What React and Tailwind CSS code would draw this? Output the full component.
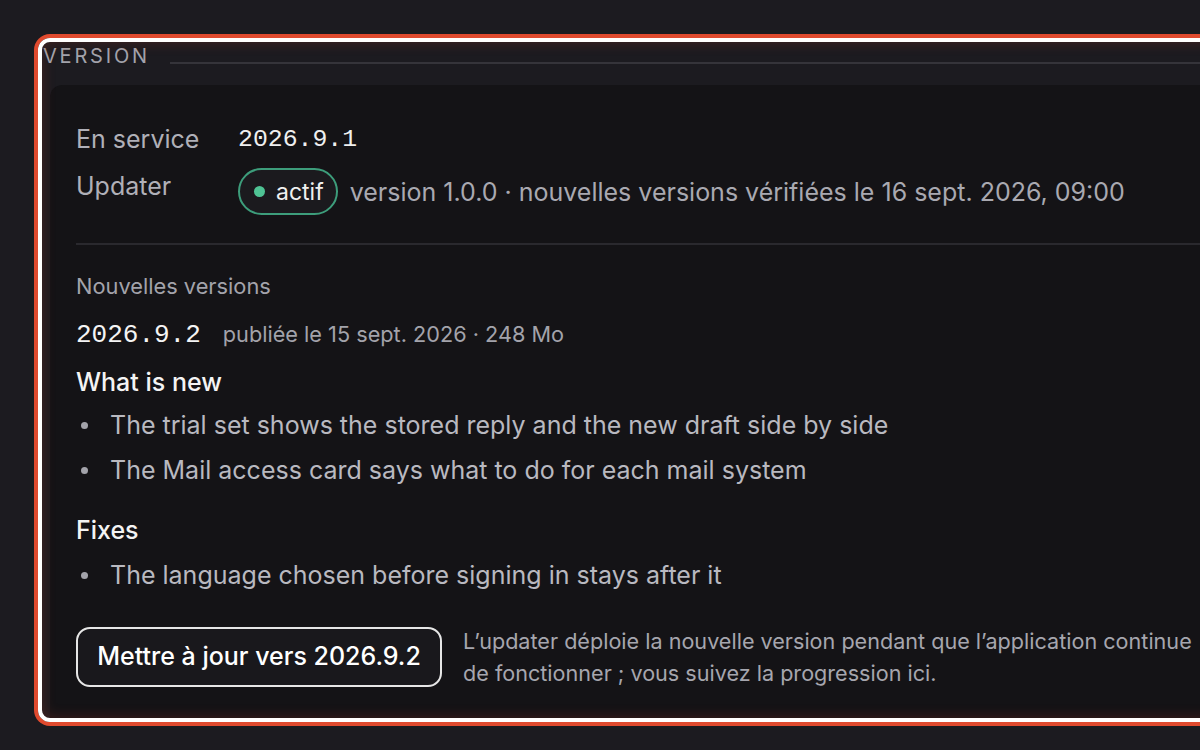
import React from "react";

const whatsNew = [
  "The trial set shows the stored reply and the new draft side by side",
  "The Mail access card says what to do for each mail system",
];

const fixes = ["The language chosen before signing in stays after it"];

function Bullets({ items, className }) {
  return (
    <ul className={`flex flex-col gap-[9px] ${className}`}>
      {items.map((item) => (
        <li key={item} className="flex items-center text-[25px] leading-[36px] text-[#b9b9c0]">
          <span className="w-[16px] flex justify-center">
            <span className="w-[7px] h-[7px] rounded-full bg-[#a3a3aa]"></span>
          </span>
          <span className="ml-[18px] whitespace-nowrap">{item}</span>
        </li>
      ))}
    </ul>
  );
}

export default function App() {
  return (
    <div className="w-[1200px] h-[750px] overflow-hidden bg-[#1c1b20] font-['Inter',sans-serif] pt-[38px] pl-[38px]">
      {/* highlighted section */}
      <div className="relative w-[1240px] h-[684px] rounded-[12px] border-4 border-white shadow-[0_0_0_4px_#e04a2e] overflow-hidden flex flex-col">
        <div className="flex items-end">
          <span className="pl-[1px] text-[20px] leading-[28px] tracking-[0.14em] text-[#a3a3ab]">VERSION</span>
          <div className="ml-[20px] mb-[6px] flex-1 h-[2px] bg-[#35343a]"></div>
        </div>

        <div className="mt-[15px] ml-[8px] flex-1 rounded-tl-[12px] bg-[#141316] pl-[26px] pt-[36px]">
          <div className="grid grid-cols-[162px_1fr] gap-y-[11px] items-start">
            <span className="text-[25px] leading-[36px] text-[#b0b0b8]">En service</span>
            <span className="font-['Liberation_Mono',monospace] text-[24.8px] leading-[36px] text-[#efefef]">2026.9.1</span>

            <span className="text-[25px] leading-[36px] text-[#b0b0b8]">Updater</span>
            <div className="flex items-center gap-[12px]">
              <span className="h-[47px] pl-[14px] pr-[12px] rounded-full border-2 border-[#3d9d7b] bg-[#1b1a1e] flex items-center gap-[11px]">
                <span className="w-[11px] h-[11px] rounded-full bg-[#4fc394]"></span>
                <span className="text-[23px] leading-[36px] text-[#f0f0f0]">actif</span>
              </span>
              <span className="text-[25px] leading-[36px] text-[#a9a9b1] whitespace-nowrap">
                version 1.0.0 · nouvelles versions vérifiées le 16 sept. 2026, 09:00
              </span>
            </div>
          </div>

          <div className="mt-[28px] h-[2px] bg-[#2a292e]"></div>

          <div className="mt-[26px] text-[21.8px] leading-[30px] text-[#a3a3ab]">Nouvelles versions</div>

          <div className="mt-[15px] flex items-baseline">
            <span className="font-['Liberation_Mono',monospace] text-[26px] leading-[36px] text-[#f4f4f4]">2026.9.2</span>
            <span className="ml-[22px] text-[21.7px] leading-[36px] text-[#a3a3ab]">publiée le 15 sept. 2026 · 248 Mo</span>
          </div>

          <div className="mt-[11px] text-[25px] leading-[36px] font-medium text-[#f4f4f4]">What is new</div>
          <Bullets items={whatsNew} className="mt-[7px]" />

          <div className="mt-[24px] text-[25px] leading-[36px] font-medium text-[#f4f4f4]">Fixes</div>
          <Bullets items={fixes} className="mt-[9px]" />

          <div className="mt-[32px] flex items-center gap-[21px]">
            <button className="w-[366px] h-[60px] rounded-[14px] border-2 border-[#e6e6e6] bg-[#19181c] text-[25px] font-medium text-white">
              Mettre à jour vers 2026.9.2
            </button>
            <p className="w-[736px] text-[21.6px] leading-[32px] text-[#a6a6ae]">
              L’updater déploie la nouvelle version pendant que l’application continue de fonctionner ; vous suivez la progression ici.
            </p>
          </div>
        </div>

        {/* inner glow of the highlight ring */}
        <div className="pointer-events-none absolute inset-0 rounded-[8px] shadow-[inset_0_0_14px_rgba(224,74,46,0.22)]"></div>
      </div>
    </div>
  );
}
